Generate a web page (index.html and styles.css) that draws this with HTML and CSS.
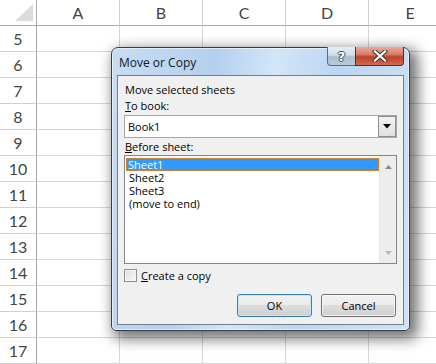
FILE: index.html
```html
<!DOCTYPE html>
<html>
<head>
<meta charset="utf-8">
<link rel="stylesheet" href="styles.css">
</head>
<body>
<div class="sheet">
  <div class="corner"><svg width="37" height="26" viewBox="0 0 37 26"><polygon points="15,21 33,21 33,4" fill="#dcdcdc"/></svg></div>
  <div class="ch">A</div><div class="ch">B</div><div class="ch">C</div><div class="ch">D</div><div class="ch">E</div>
  <div class="rh">5</div><div class="c"></div><div class="c"></div><div class="c"></div><div class="c"></div><div class="c"></div>
  <div class="rh">6</div><div class="c"></div><div class="c"></div><div class="c"></div><div class="c"></div><div class="c"></div>
  <div class="rh">7</div><div class="c"></div><div class="c"></div><div class="c"></div><div class="c"></div><div class="c"></div>
  <div class="rh">8</div><div class="c"></div><div class="c"></div><div class="c"></div><div class="c"></div><div class="c"></div>
  <div class="rh">9</div><div class="c"></div><div class="c"></div><div class="c"></div><div class="c"></div><div class="c"></div>
  <div class="rh">10</div><div class="c"></div><div class="c"></div><div class="c"></div><div class="c"></div><div class="c"></div>
  <div class="rh">11</div><div class="c"></div><div class="c"></div><div class="c"></div><div class="c"></div><div class="c"></div>
  <div class="rh">12</div><div class="c"></div><div class="c"></div><div class="c"></div><div class="c"></div><div class="c"></div>
  <div class="rh">13</div><div class="c"></div><div class="c"></div><div class="c"></div><div class="c"></div><div class="c"></div>
  <div class="rh">14</div><div class="c"></div><div class="c"></div><div class="c"></div><div class="c"></div><div class="c"></div>
  <div class="rh">15</div><div class="c"></div><div class="c"></div><div class="c"></div><div class="c"></div><div class="c"></div>
  <div class="rh">16</div><div class="c"></div><div class="c"></div><div class="c"></div><div class="c"></div><div class="c"></div>
  <div class="rh">17</div><div class="c"></div><div class="c"></div><div class="c"></div><div class="c"></div><div class="c"></div>
</div>

<div class="dialog">
  <div class="titlebar">
    <span class="title">Move or Copy</span>
    <div class="capbtns">
      <div class="help">?</div>
      <div class="close"><svg width="16" height="12" viewBox="0 0 16 12"><path d="M3 1.5 L13 10.5 M13 1.5 L3 10.5" stroke="#3b3b3b" stroke-width="4.2" stroke-linecap="square" fill="none"/><path d="M3 1.5 L13 10.5 M13 1.5 L3 10.5" stroke="#ffffff" stroke-width="2.2" stroke-linecap="square" fill="none"/></svg></div>
    </div>
  </div>
  <div class="panel">
    <div class="lbl">Move selected sheets</div>
    <div class="lbl"><u>T</u>o book:</div>
    <div class="combo">
      <span class="combo-text">Book1</span>
      <div class="dd"><svg width="8" height="5" viewBox="0 0 8 5"><polygon points="0,0 8,0 4,4.5" fill="#000"/></svg></div>
    </div>
    <div class="lbl before"><u>B</u>efore sheet:</div>
    <div class="list">
      <div class="items">
        <div class="item sel">Sheet1</div>
        <div class="item">Sheet2</div>
        <div class="item">Sheet3</div>
        <div class="item">(move to end)</div>
      </div>
      <div class="scroll">
        <svg width="7" height="4" viewBox="0 0 7 4"><polygon points="0,4 7,4 3.5,0" fill="#8a8a8a"/></svg>
        <svg width="7" height="4" viewBox="0 0 7 4"><polygon points="0,0 7,0 3.5,4" fill="#b8b8b8"/></svg>
      </div>
    </div>
    <div class="chkrow"><span class="box"></span><span><u>C</u>reate a copy</span></div>
    <div class="btns">
      <div class="btn default">OK</div>
      <div class="btn">Cancel</div>
    </div>
  </div>
</div>
</body>
</html>
```
FILE: styles.css
```css
html, body {
  margin: 0;
  padding: 0;
  width: 436px;
  height: 364px;
  overflow: hidden;
  background: #ffffff;
}

.sheet {
  display: grid;
  grid-template-columns: 37px repeat(5, 83px);
  grid-template-rows: 26px repeat(13, 26px);
  font-family: Lato, "Liberation Sans", sans-serif;
  font-size: 16px;
  color: #444444;
}

.sheet > div {
  box-sizing: border-box;
  border-right: 1px solid #d6d6d6;
  border-bottom: 1px solid #d6d6d6;
}

.corner {
  border-right-color: #ababab !important;
  border-bottom-color: #ababab !important;
  line-height: 0;
}

.ch {
  display: flex;
  align-items: center;
  justify-content: center;
  border-bottom-color: #ababab !important;
  border-right-color: #d0d0d0 !important;
}

.rh {
  display: flex;
  align-items: center;
  justify-content: center;
  border-right-color: #a8a8a8 !important;
  border-bottom-color: #d0d0d0 !important;
}

.dialog {
  position: absolute;
  left: 111px;
  top: 47px;
  width: 299px;
  height: 284px;
  box-sizing: border-box;
  border: 1px solid #383d44;
  border-radius: 7px 7px 5px 5px;
  padding: 0 5px 5px 5px;
  display: flex;
  flex-direction: column;
  background: linear-gradient(100deg, #c8ddf4 0%, #b4d0ee 30%, #d3e5f8 48%, #bcd6f1 66%, #cfe2f6 100%);
  box-shadow: inset 0 0 0 1px rgba(255,255,255,0.55), 5px 5px 14px 3px rgba(0,0,0,0.55);
  font-family: "Open Sans", "Noto Sans", sans-serif;
  font-size: 11px;
  color: #000;
}

.titlebar {
  height: 27px;
  display: flex;
  justify-content: space-between;
  align-items: flex-start;
}

.title {
  align-self: center;
  padding-left: 2px;
  font-size: 12px;
  color: #101820;
  margin-top: 1px;
}

.capbtns {
  display: flex;
  margin-top: -1px;
}

.help, .close {
  box-sizing: border-box;
  height: 19px;
  display: flex;
  align-items: center;
  justify-content: center;
}

.help {
  width: 28px;
  border: 1px solid #5e6b7b;
  border-top: none;
  border-right: none;
  border-radius: 0 0 0 4px;
  background: linear-gradient(#e6edf5 0%, #d2dde9 45%, #a9bbd0 55%, #bccbdc 100%);
  font-family: "DejaVu Sans", sans-serif;
  font-weight: bold;
  font-size: 13px;
  color: #ffffff;
  text-shadow: -1px 0 #3f4a58, 1px 0 #3f4a58, 0 -1px #3f4a58, 0 1px #3f4a58;
}

.close {
  width: 49px;
  border: 1px solid #5b2a22;
  border-top: none;
  border-radius: 0 0 4px 0;
  background: linear-gradient(#e9a99b 0%, #d9806d 40%, #c1412a 55%, #d26a52 100%);
}

.panel {
  flex: 1;
  box-sizing: border-box;
  border: 1px solid #707f90;
  background: #f0f0f0;
  padding: 6px 6px 0 6px;
  display: flex;
  flex-direction: column;
}

.lbl {
  line-height: 16px;
  height: 16px;
  padding-left: 1px;
  white-space: nowrap;
}

.combo {
  margin-top: 1px;
  height: 23px;
  box-sizing: border-box;
  border: 1px solid #a6a6a6;
  background: #fff;
  display: flex;
  align-items: center;
  justify-content: space-between;
}

.combo-text {
  padding-left: 3px;
}

.dd {
  box-sizing: border-box;
  width: 18px;
  height: 21px;
  border: 1px solid #8f8f8f;
  background: linear-gradient(#f2f2f2, #e0e0e0);
  display: flex;
  align-items: center;
  justify-content: center;
}

.before {
  margin-top: 1px;
}

.list {
  height: 109px;
  box-sizing: border-box;
  border: 1px solid #82878f;
  background: #fff;
  display: flex;
}

.items {
  flex: 1;
  padding: 2px 0 0 1px;
}

.item {
  height: 13px;
  line-height: 13px;
  padding-left: 2px;
  border: 1px solid transparent;
  border-width: 0 1px;
  white-space: nowrap;
}

.item.sel {
  background: #3399ff;
  color: #fff;
  box-sizing: border-box;
  border: 1px dotted #d58a3a;
  line-height: 11px;
  padding-left: 1px;
}

.scroll {
  width: 17px;
  box-sizing: border-box;
  background: #ededed;
  border-left: 1px solid #e4e4e4;
  display: flex;
  flex-direction: column;
  align-items: center;
  justify-content: space-between;
  padding: 9px 0 8px 0;
}

.chkrow {
  margin-top: 5px;
  height: 13px;
  display: flex;
  align-items: center;
  gap: 4px;
  white-space: nowrap;
}

.box {
  width: 13px;
  height: 13px;
  box-sizing: border-box;
  border: 1px solid #8e8f8f;
  background: linear-gradient(135deg, #dcdcdc, #fafafa);
  box-shadow: inset 0 0 0 1px #f4f4f4;
}

.btns {
  margin-top: 12px;
  margin-right: 1px;
  display: flex;
  justify-content: flex-end;
  gap: 9px;
}

.btn {
  width: 75px;
  height: 23px;
  box-sizing: border-box;
  border: 1px solid #707070;
  border-radius: 3px;
  background: linear-gradient(#f2f2f2 0%, #ebebeb 50%, #dddddd 50%, #cfcfcf 100%);
  box-shadow: inset 0 0 0 1px rgba(255,255,255,0.7);
  display: flex;
  align-items: center;
  justify-content: center;
}

.btn.default {
  border-color: #3c7fb1;
  box-shadow: inset 0 0 0 1px #c6e4f7;
}
```
